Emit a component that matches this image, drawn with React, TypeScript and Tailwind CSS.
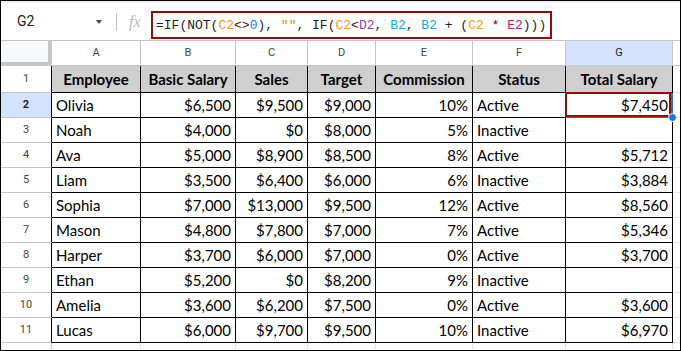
import React from "react";

const cols = ["A", "B", "C", "D", "E", "F", "G"];
const widths = "grid-cols-[51px_89px_95px_72px_68px_97px_93px_107px_1fr]";

type Row = [string, string, string, string, string, string, string];
const header: Row = ["Employee", "Basic Salary", "Sales", "Target", "Commission", "Status", "Total Salary"];
const data: Row[] = [
  ["Olivia", "$6,500", "$9,500", "$9,000", "10%", "Active", "$7,450"],
  ["Noah", "$4,000", "$0", "$8,000", "5%", "Inactive", ""],
  ["Ava", "$5,000", "$8,900", "$8,500", "8%", "Active", "$5,712"],
  ["Liam", "$3,500", "$6,400", "$6,000", "6%", "Inactive", "$3,884"],
  ["Sophia", "$7,000", "$13,000", "$9,500", "12%", "Active", "$8,560"],
  ["Mason", "$4,800", "$7,800", "$7,000", "7%", "Active", "$5,346"],
  ["Harper", "$3,700", "$6,000", "$7,000", "0%", "Active", "$3,700"],
  ["Ethan", "$5,200", "$0", "$8,200", "9%", "Inactive", ""],
  ["Amelia", "$3,600", "$6,200", "$7,500", "0%", "Active", "$3,600"],
  ["Lucas", "$6,000", "$9,700", "$9,500", "10%", "Inactive", "$6,970"],
];

const leftCols = [0, 5];

function Formula() {
  const dark = "text-[#1f1f1f]";
  const orange = "text-[#f29a2e]";
  const blue = "text-[#2f6fd6]";
  const str = "text-[#e58a12]";
  const purple = "text-[#8a3fa6]";
  const teal = "text-[#1ea6d6]";
  const mag = "text-[#a8286a]";
  return (
    <span className="whitespace-pre font-['Liberation_Mono',monospace] text-[13px] leading-none">
      <span className={dark}>=IF(NOT(</span>
      <span className={orange}>C2</span>
      <span className={dark}>&lt;&gt;</span>
      <span className={blue}>0</span>
      <span className={dark}>), </span>
      <span className={str}>""</span>
      <span className={dark}>, IF(</span>
      <span className={orange}>C2</span>
      <span className={dark}>&lt;</span>
      <span className={purple}>D2</span>
      <span className={dark}>, </span>
      <span className={teal}>B2</span>
      <span className={dark}>, </span>
      <span className={teal}>B2</span>
      <span className={dark}> + (</span>
      <span className={orange}>C2</span>
      <span className={dark}> * </span>
      <span className={mag}>E2</span>
      <span className={dark}>)))</span>
    </span>
  );
}

export default function App() {
  return (
    <div className="w-[681px] h-[351px] border border-black bg-white overflow-hidden font-['Roboto',sans-serif]">
      {/* top bar */}
      <div className="h-[39px] relative flex items-center bg-white">
        <div className="absolute left-0 top-0 w-full h-[2px] bg-[#f1f3f4]" />
        <div className="w-[95px] pl-[16px] text-[14px] text-[#1f1f1f] pt-[2px]">G2</div>
        <div className="w-0 h-0 border-l-[3px] border-r-[3px] border-t-[4px] border-l-transparent border-r-transparent border-t-[#444746] mt-[2px]" />
        <div className="ml-[14px] w-px h-[18px] bg-[#c4c7c5] mt-[2px]" />
        <div className="ml-[12px] w-[22px] text-[16px] italic text-[#b8b8b8] font-['Liberation_Serif',serif] pt-[2px]">fx</div>
        <div className="ml-[0px] mt-[9px] mb-[1px] w-[401px] h-[28px] border-2 border-[#9b0a0a] flex items-center pl-[3px] pt-[1px]">
          <Formula />
        </div>
      </div>

      {/* grid */}
      <div className={`grid ${widths} text-black`}>
        {/* column header row */}
        <div className="h-[26px] bg-[#f8f9fa] border-t border-t-[#c4c7c5] border-r-4 border-b-4 border-[#c4c7c5]" />
        {cols.map((c) => (
          <div
            key={c}
            className={`h-[26px] border-t border-r border-b border-[#c4c7c5] flex items-center justify-center text-[11px] ${
              c === "G" ? "bg-[#d3e3fd] text-[#1f1f1f]" : "bg-white text-[#444746]"
            }`}
          >
            {c}
          </div>
        ))}
        <div className="h-[26px] border-t border-b border-[#c4c7c5] bg-white" />

        {/* row 1 */}
        <div className="h-[27px] border-r border-r-black border-b border-b-[#c4c7c5] flex items-center justify-center text-[11px] text-[#444746] bg-white">
          1
        </div>
        {header.map((h, i) => (
          <div
            key={i}
            className="h-[27px] border-r border-b border-black bg-[#cfcfcf] flex items-end justify-center pb-[2px] font-['Lato',sans-serif] font-bold text-[15px] whitespace-nowrap overflow-hidden"
          >
            {h}
          </div>
        ))}
        <div className="h-[27px] border-b border-[#e2e2e2]" />

        {/* data rows */}
        {data.map((r, ri) => {
          const num = ri + 2;
          const sel = num === 2;
          return (
            <React.Fragment key={ri}>
              <div
                className={`h-[25px] border-r border-r-black border-b border-b-[#c4c7c5] flex items-center justify-center text-[11px] ${
                  sel ? "bg-[#d3e3fd] font-bold text-[#1f1f1f]" : "bg-white text-[#444746]"
                }`}
              >
                {num}
              </div>
              {r.map((v, ci) => (
                <div
                  key={ci}
                  className={`relative h-[25px] border-r border-b border-black flex items-center font-['Lato',sans-serif] text-[15px] whitespace-nowrap pt-[1px] ${
                    leftCols.includes(ci) ? "justify-start pl-[4px]" : "justify-end pr-[4px]"
                  }`}
                >
                  {v}
                  {sel && ci === 6 && (
                    <>
                      <div className="absolute left-[-1px] top-[-1px] w-[106px] h-[25px] border-2 border-[#9b0a0a]" />
                      <div className="absolute right-[-1px] top-0 w-[2px] h-[25px] bg-[#1a73e8]" />
                      <div className="absolute left-0 bottom-[-1px] w-[106px] h-[1px] bg-[#1a73e8]" />
                      <div className="absolute right-[-5px] bottom-[-5px] w-[9px] h-[9px] rounded-full bg-[#1a73e8] border border-white z-10" />
                    </>
                  )}
                </div>
              ))}
              <div className="h-[25px] border-b border-[#e2e2e2]" />
            </React.Fragment>
          );
        })}

        {/* row 12 partial */}
        <div className="h-[25px] border-r border-[#c4c7c5] flex items-center justify-center text-[11px] text-[#444746] bg-white">
          12
        </div>
        {cols.map((c) => (
          <div key={c} className="h-[25px] border-r border-[#e2e2e2]" />
        ))}
        <div className="h-[25px]" />
      </div>
    </div>
  );
}
